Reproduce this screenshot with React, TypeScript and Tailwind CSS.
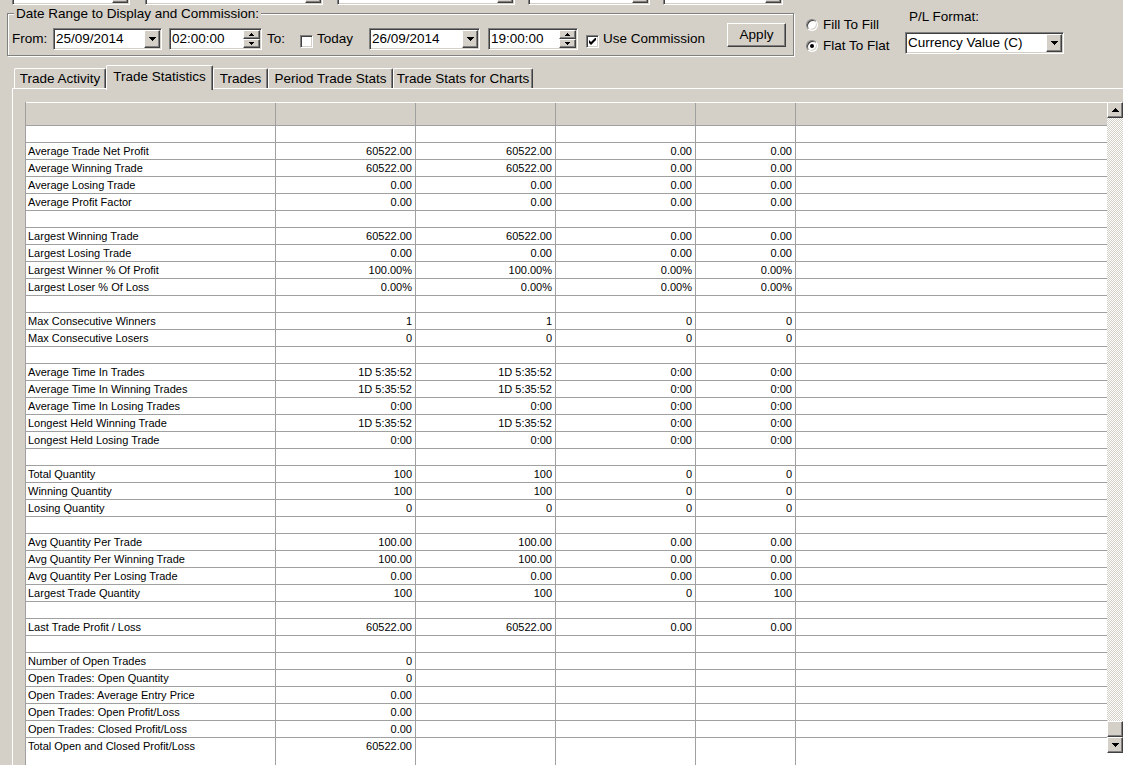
import React from "react";

const raised =
  "border border-t-white border-l-white border-r-[#404040] border-b-[#404040] shadow-[inset_-1px_-1px_#808080] bg-[#d4d0c8]";
const sunken =
  "border border-t-[#808080] border-l-[#808080] border-r-white border-b-white shadow-[inset_1px_1px_#404040,inset_-1px_-1px_#d4d0c8]";

function Arrow({ up, small }: { up?: boolean; small?: boolean }) {
  const w = small ? 5 : 7;
  const h = small ? 3 : 4;
  const pts = up ? `${w / 2},0 ${w},${h} 0,${h}` : `0,0 ${w},0 ${w / 2},${h}`;
  return (
    <svg width={w} height={h} viewBox={`0 0 ${w} ${h}`} shapeRendering="crispEdges">
      <polygon points={pts} fill="#000" />
    </svg>
  );
}

function Combo({ text, className }: { text?: string; className: string }) {
  return (
    <div className={`${sunken} bg-white h-[22px] shrink-0 flex items-center ${className}`}>
      <span className="flex-1 pl-[2px] leading-[16px] whitespace-nowrap overflow-hidden">{text}</span>
      <div className={`${raised} w-[16px] h-[18px] mr-px flex items-center justify-center`}>
        <Arrow />
      </div>
    </div>
  );
}

function Spin({ text, className }: { text: string; className: string }) {
  return (
    <div className={`${sunken} bg-white h-[22px] shrink-0 flex items-center ${className}`}>
      <span className="flex-1 pl-[2px] leading-[16px]">{text}</span>
      <div className="flex flex-col mr-px">
        <div className={`${raised} w-[17px] h-[9px] flex items-center justify-center`}>
          <Arrow up small />
        </div>
        <div className={`${raised} w-[17px] h-[9px] flex items-center justify-center`}>
          <Arrow small />
        </div>
      </div>
    </div>
  );
}

function Check({ on, className }: { on?: boolean; className: string }) {
  return (
    <div className={`${sunken} bg-white w-[13px] h-[13px] shrink-0 flex items-center justify-center ${className}`}>
      {on && (
        <svg width="7" height="7" viewBox="0 0 7 7">
          <path d="M0 2 L2 4 L7 -1 L7 2 L2 7 L0 5 Z" fill="#000" />
        </svg>
      )}
    </div>
  );
}

function Radio({ on }: { on?: boolean }) {
  return (
    <div className="w-[12px] h-[12px] rounded-full bg-white border border-t-[#808080] border-l-[#808080] border-r-white border-b-white shadow-[inset_1px_1px_#404040,inset_-1px_-1px_#d4d0c8] flex items-center justify-center">
      {on && <div className="w-[4px] h-[4px] rounded-full bg-black" />}
    </div>
  );
}

const tabs = [
  { label: "Trade Activity", w: "w-[92px]" },
  { label: "Trade Statistics", w: "w-[107px]", active: true },
  { label: "Trades", w: "w-[55px]" },
  { label: "Period Trade Stats", w: "w-[125px]" },
  { label: "Trade Stats for Charts", w: "w-[140px]" },
];

const rows: string[][] = [
  [],
  ["Average Trade Net Profit", "60522.00", "60522.00", "0.00", "0.00"],
  ["Average Winning Trade", "60522.00", "60522.00", "0.00", "0.00"],
  ["Average Losing Trade", "0.00", "0.00", "0.00", "0.00"],
  ["Average Profit Factor", "0.00", "0.00", "0.00", "0.00"],
  [],
  ["Largest Winning Trade", "60522.00", "60522.00", "0.00", "0.00"],
  ["Largest Losing Trade", "0.00", "0.00", "0.00", "0.00"],
  ["Largest Winner % Of Profit", "100.00%", "100.00%", "0.00%", "0.00%"],
  ["Largest Loser % Of Loss", "0.00%", "0.00%", "0.00%", "0.00%"],
  [],
  ["Max Consecutive Winners", "1", "1", "0", "0"],
  ["Max Consecutive Losers", "0", "0", "0", "0"],
  [],
  ["Average Time In Trades", "1D 5:35:52", "1D 5:35:52", "0:00", "0:00"],
  ["Average Time In Winning Trades", "1D 5:35:52", "1D 5:35:52", "0:00", "0:00"],
  ["Average Time In Losing Trades", "0:00", "0:00", "0:00", "0:00"],
  ["Longest Held Winning Trade", "1D 5:35:52", "1D 5:35:52", "0:00", "0:00"],
  ["Longest Held Losing Trade", "0:00", "0:00", "0:00", "0:00"],
  [],
  ["Total Quantity", "100", "100", "0", "0"],
  ["Winning Quantity", "100", "100", "0", "0"],
  ["Losing Quantity", "0", "0", "0", "0"],
  [],
  ["Avg Quantity Per Trade", "100.00", "100.00", "0.00", "0.00"],
  ["Avg Quantity Per Winning Trade", "100.00", "100.00", "0.00", "0.00"],
  ["Avg Quantity Per Losing Trade", "0.00", "0.00", "0.00", "0.00"],
  ["Largest Trade Quantity", "100", "100", "0", "100"],
  [],
  ["Last Trade Profit / Loss", "60522.00", "60522.00", "0.00", "0.00"],
  [],
  ["Number of Open Trades", "0"],
  ["Open Trades: Open Quantity", "0"],
  ["Open Trades: Average Entry Price", "0.00"],
  ["Open Trades: Open Profit/Loss", "0.00"],
  ["Open Trades: Closed Profit/Loss", "0.00"],
  ["Total Open and Closed Profit/Loss", "60522.00"],
];

const cols = ["w-[250px]", "w-[140px]", "w-[140px]", "w-[140px]", "w-[100px]"];

function Cells({ values }: { values?: string[] }) {
  return (
    <>
      {cols.map((w, i) => (
        <div
          key={i}
          className={`${w} shrink-0 h-full border-r border-[#a0a0a0] whitespace-nowrap overflow-hidden ${
            i === 0 ? "pl-[2px] text-left" : "pr-[3px] text-right"
          }`}
        >
          {values?.[i] ?? ""}
        </div>
      ))}
      <div className="flex-1 h-full" />
    </>
  );
}

export default function App() {
  return (
    <div className="w-[1123px] h-[765px] overflow-hidden bg-[#d4d0c8] flex flex-col text-black font-['Liberation_Sans',Arial,sans-serif] text-[13.5px]">
      {/* combos cut off at the top edge */}
      <div className="h-[5px] shrink-0 flex items-end overflow-hidden pl-[12px]">
        <Combo className="w-[118px]" />
        <Combo className="w-[178px] ml-[15px]" />
        <Combo className="w-[178px] ml-[14px]" />
        <Combo className="w-[122px] ml-[13px]" />
        <Combo className="w-[120px] ml-[13px]" />
      </div>

      {/* date range / commission settings */}
      <div className="h-[60px] shrink-0 flex items-start">
        <div className="relative mt-[8px] ml-[7px] w-[787px] h-[43px] shrink-0 border border-[#808080] shadow-[inset_1px_1px_#fff,1px_1px_#fff] flex items-start">
          <span className="absolute -top-[8px] left-[6px] px-[2px] bg-[#d4d0c8] leading-[16px] whitespace-nowrap">
            Date Range to Display and Commission:
          </span>
          <div className="mt-[14px] ml-[4px] w-[41px] h-[22px] flex items-center">From:</div>
          <Combo text="25/09/2014" className="mt-[14px] w-[109px]" />
          <Spin text="02:00:00" className="mt-[14px] ml-[7px] w-[93px]" />
          <div className="mt-[14px] ml-[5px] w-[33px] h-[22px] flex items-center">To:</div>
          <Check className="mt-[21px]" />
          <div className="mt-[14px] ml-[4px] w-[52px] h-[22px] flex items-center">Today</div>
          <Combo text="26/09/2014" className="mt-[14px] w-[111px]" />
          <Spin text="19:00:00" className="mt-[14px] ml-[8px] w-[90px]" />
          <Check on className="mt-[21px] ml-[8px]" />
          <div className="mt-[14px] ml-[4px] w-[124px] h-[22px] flex items-center whitespace-nowrap">
            Use Commission
          </div>
          <button className={`${raised} mt-[9px] w-[59px] h-[24px] flex items-center justify-center`}>Apply</button>
        </div>

        <div className="mt-[12px] ml-[12px] w-[99px] shrink-0 flex flex-col gap-[5px]">
          <div className="h-[16px] flex items-center gap-[5px] whitespace-nowrap">
            <Radio />
            <span>Fill To Fill</span>
          </div>
          <div className="h-[16px] flex items-center gap-[5px] whitespace-nowrap">
            <Radio on />
            <span>Flat To Flat</span>
          </div>
        </div>

        <div className="mt-[4px] flex flex-col">
          <div className="pl-[4px] leading-[16px]">P/L Format:</div>
          <Combo text="Currency Value (C)" className="mt-[7px] w-[159px]" />
        </div>
      </div>

      {/* tabs */}
      <div className="h-[23px] shrink-0 flex items-end ml-[14px]">
        {tabs.map((t) =>
          t.active ? (
            <div
              key={t.label}
              className={`${t.w} relative z-10 h-[25px] -mb-[2px] bg-[#d4d0c8] border-t border-l border-r border-t-white border-l-white border-r-[#404040] shadow-[inset_-1px_0_#808080] rounded-t-[2px] flex justify-center pt-[3px] leading-[16px] whitespace-nowrap`}
            >
              {t.label}
            </div>
          ) : (
            <div
              key={t.label}
              className={`${t.w} h-[20px] border-t border-l border-r border-t-white border-l-white border-r-[#404040] shadow-[inset_-1px_0_#808080] rounded-t-[2px] flex justify-center pt-[2px] leading-[16px] whitespace-nowrap`}
            >
              {t.label}
            </div>
          )
        )}
      </div>

      {/* tab panel */}
      <div className="flex-1 min-h-0 ml-[12px] border-t border-l border-white pl-[12px] pt-[13px] flex flex-col">
        <div className="flex-1 min-h-0 flex bg-white">
          <div className="flex-1 min-w-0 flex flex-col border-l border-[#a0a0a0] text-[11px] leading-[16px]">
            <div className="h-[24px] shrink-0 flex bg-[#d4d0c8] border-t border-t-white border-b border-b-[#a0a0a0]">
              <Cells />
            </div>
            {rows.map((r, i) => (
              <div
                key={i}
                className={`shrink-0 flex ${i === rows.length - 1 ? "h-[16px]" : "h-[17px] border-b border-[#a0a0a0]"}`}
              >
                <Cells values={r} />
              </div>
            ))}
            <div className="flex-1 flex">
              <Cells />
            </div>
          </div>

          {/* vertical scrollbar */}
          <div className="w-[16px] shrink-0 flex flex-col">
            <div className={`${raised} h-[16px] shrink-0 flex items-center justify-center`}>
              <Arrow up />
            </div>
            <div className="flex-1 bg-[image:repeating-conic-gradient(#ffffff_0%_25%,#d4d0c8_0%_50%)] bg-size-[2px_2px]" />
            <div className={`${raised} h-[16px] shrink-0`} />
            <div className={`${raised} h-[16px] shrink-0 flex items-center justify-center`}>
              <Arrow />
            </div>
            <div className="h-[12px] shrink-0 bg-white" />
          </div>
        </div>
      </div>
    </div>
  );
}
